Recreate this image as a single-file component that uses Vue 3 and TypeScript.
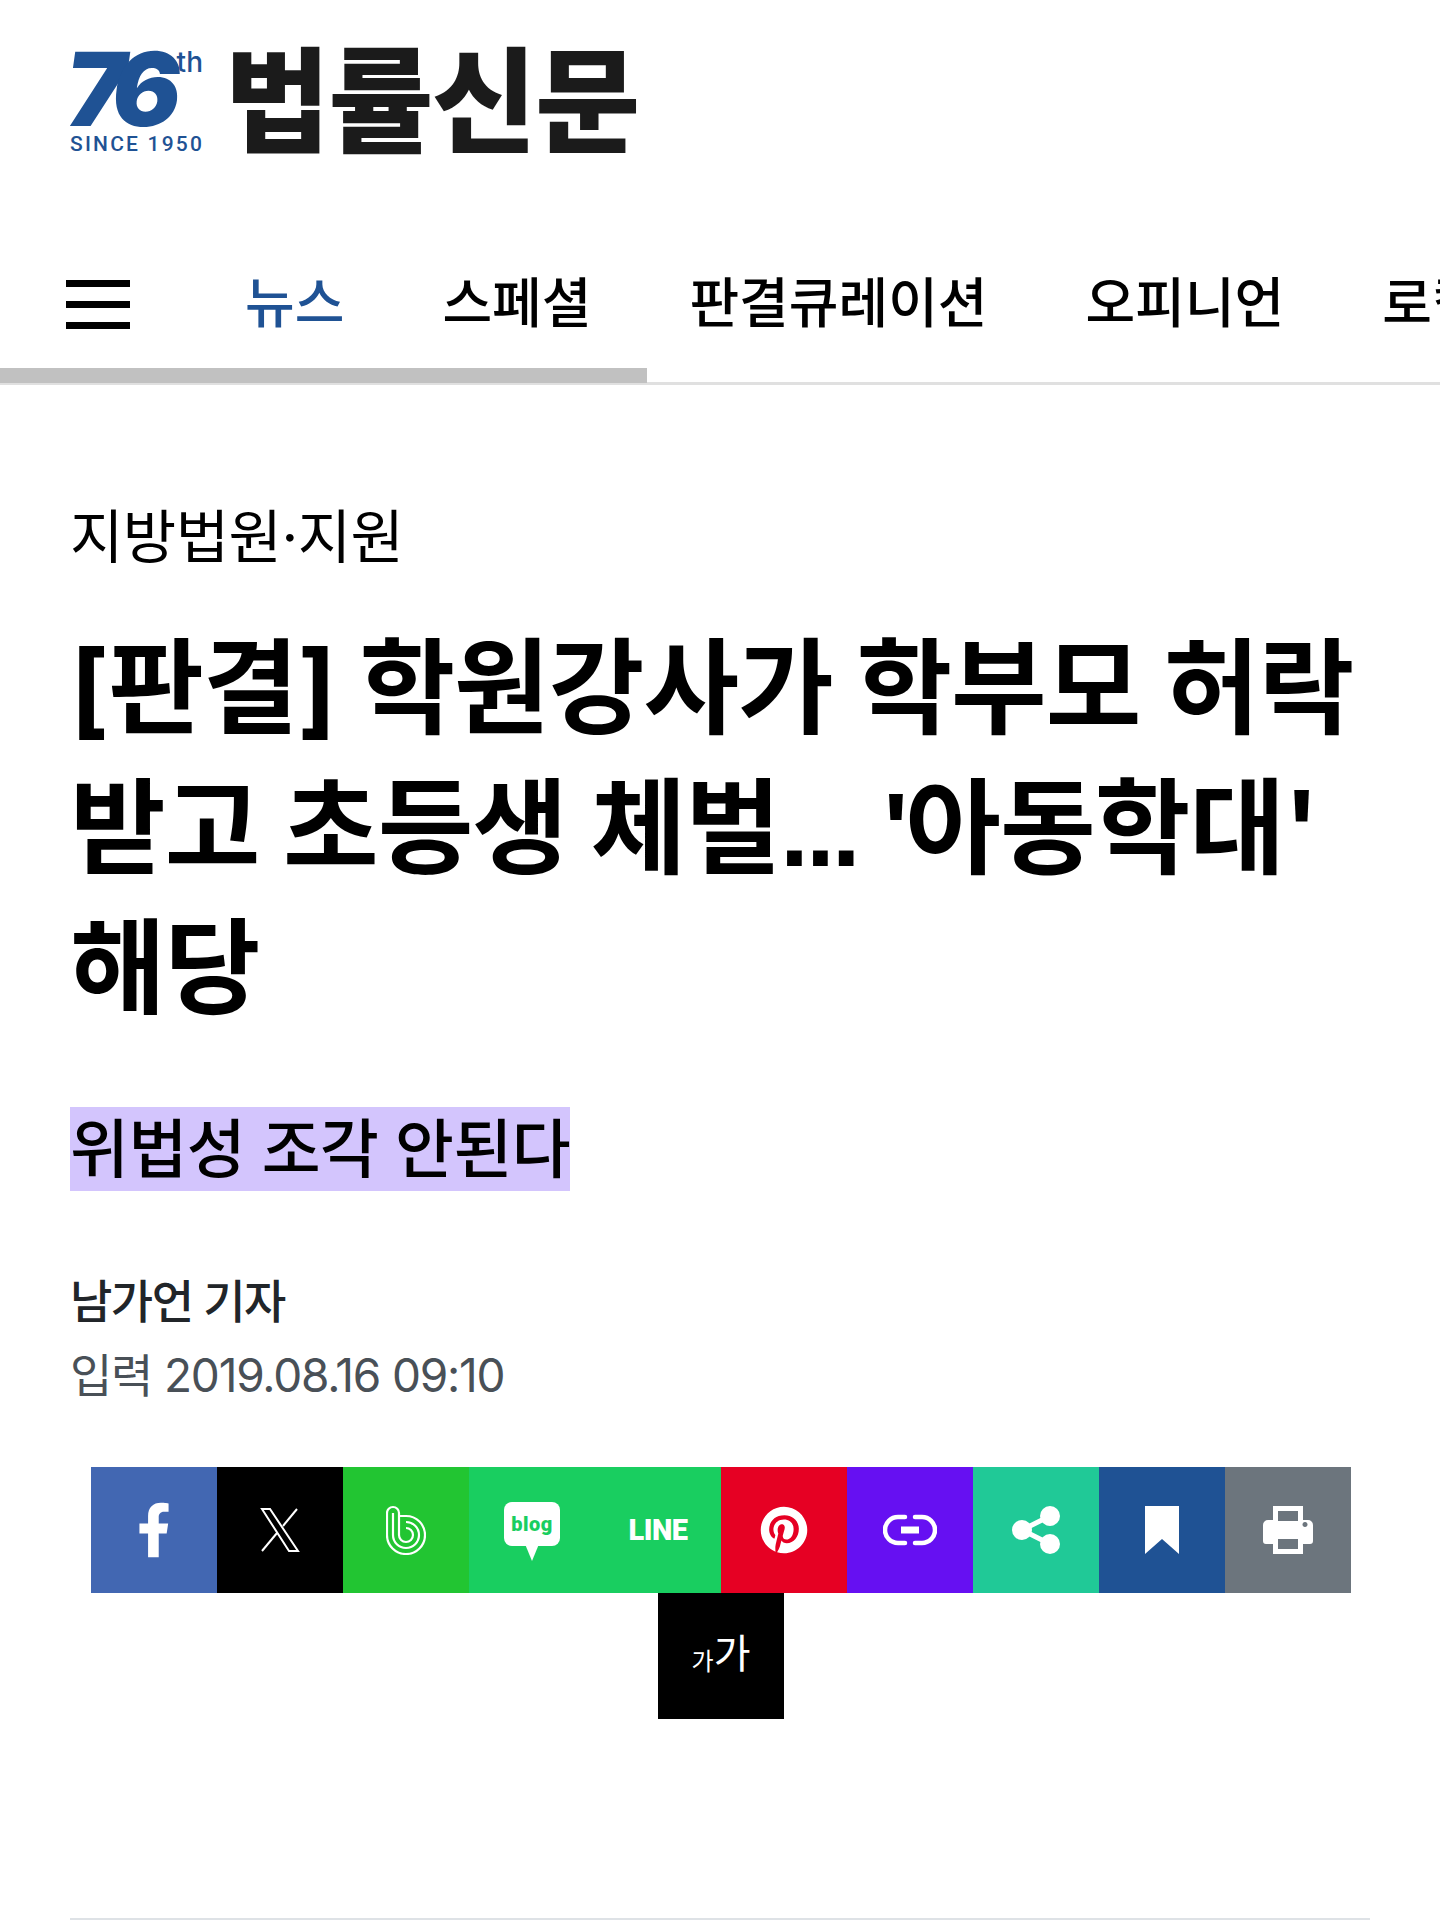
<script setup lang="ts">
const navItems = ['스페셜', '판결큐레이션', '오피니언', '로컬']
</script>

<template>
  <div class="page">
    <header class="brand">
      <div class="mark">
        <div class="years"><span class="digits">76</span><span class="th">th</span></div>
        <div class="since">SINCE 1950</div>
      </div>
      <div class="paper">법률신문</div>
    </header>

    <nav class="nav">
      <button class="burger" aria-label="메뉴">
        <i></i><i></i><i></i>
      </button>
      <a class="nav-item active">뉴스</a>
      <a v-for="item in navItems" :key="item" class="nav-item">{{ item }}</a>
      <div class="nav-progress"></div>
    </nav>

    <main class="article">
      <div class="category">지방법원·지원</div>
      <h1 class="title">[판결] 학원강사가 학부모 허락 받고 초등생 체벌<span class="tight">... '</span>아동학대' 해당</h1>
      <h2 class="subtitle"><span>위법성 조각 안된다</span></h2>
      <div class="author">남가언 기자</div>
      <div class="date">입력 2019.08.16 09:10</div>

      <div class="share">
        <a class="btn facebook">
          <svg width="34" height="56" viewBox="0 0 320 512"><path fill="#fff" d="M279.14 288l14.22-92.66h-88.91v-60.13c0-25.35 12.42-50.06 52.24-50.06h40.42V6.26S260.43 0 225.36 0c-73.22 0-121.08 44.38-121.08 124.72v70.62H22.89V288h81.39v224h100.17V288z" /></svg>
        </a>
        <a class="btn x">
          <svg width="40" height="46" viewBox="0 0 40 46" fill="none" stroke="#fff" stroke-width="2">
            <path d="M2 2h8l28 42h-9z" />
            <path d="M37 2L23 19" />
            <path d="M17 26L2 44" />
          </svg>
        </a>
        <a class="btn band">
          <svg width="40" height="50" viewBox="0 0 40 50" fill="none" stroke="#fff" stroke-width="2.200">
            <path d="M1 8v22a19 19 0 1 0 19-19h-7" />
            <path d="M1 8a6 6 0 0 1 12 0v22a7 7 0 1 0 7-7" />
            <path d="M7 8v22a13 13 0 1 0 13-13" />
          </svg>
        </a>
        <a class="btn blog">
          <div class="bubble"><span>blog</span></div>
        </a>
        <a class="btn line"><span>LINE</span></a>
        <a class="btn pinterest">
          <svg width="48" height="48" viewBox="0 0 496 512"><path fill="#fff" d="M496 256c0 137-111 248-248 248-25.6 0-50.2-3.9-73.4-11.1 10.1-16.5 25.2-43.5 30.8-65 3-11.6 15.4-59 15.4-59 8.1 15.4 31.7 28.5 56.8 28.5 74.8 0 128.7-68.8 128.7-154.3 0-81.9-66.9-143.2-152.9-143.2-107 0-163.9 71.8-163.9 150.1 0 36.4 19.4 81.7 50.3 96.1 4.7 2.2 7.2 1.2 8.3-3.3.8-3.4 5-20.3 6.9-28.1.6-2.5.3-4.7-1.7-7.1-10.1-12.5-18.3-35.3-18.3-56.6 0-54.7 41.4-107.6 112-107.6 60.9 0 103.6 41.5 103.6 100.9 0 67.1-33.9 113.6-78 113.6-24.3 0-42.6-20.1-36.7-44.8 7-29.5 20.5-61.3 20.5-82.6 0-19-10.2-34.9-31.4-34.9-24.9 0-44.9 25.7-44.9 60.2 0 22 7.4 36.8 7.4 36.8s-24.5 103.8-29 123.2c-5 21.4-3 51.6-.9 71.2C65.4 450.9 0 361.1 0 256 0 119 111 8 248 8s248 111 248 248z" /></svg>
        </a>
        <a class="btn link">
          <svg width="54" height="32" viewBox="0 0 54 32" fill="none" stroke="#fff" stroke-width="4.500" stroke-linecap="round">
            <path d="M22 3H15a13 13 0 0 0 0 26h7" />
            <path d="M32 3h7a13 13 0 0 1 0 26h-7" />
            <path d="M18 16h18" stroke-width="7" stroke-linecap="butt" />
          </svg>
        </a>
        <a class="btn sharing">
          <svg width="48" height="48" viewBox="0 0 48 48"><path d="M38 10L10 24l28 14" fill="none" stroke="#fff" stroke-width="5" /><circle cx="38" cy="10" r="10" fill="#fff" /><circle cx="10" cy="24" r="10" fill="#fff" /><circle cx="38" cy="38" r="10" fill="#fff" /></svg>
        </a>
        <a class="btn bookmark">
          <svg width="34" height="48" viewBox="0 0 34 48"><path fill="#fff" d="M0 0h34v48L17 33 0 48z" /></svg>
        </a>
        <a class="btn print">
          <svg width="50" height="48" viewBox="0 0 50 48"><path fill="#fff" fill-rule="evenodd" d="M10 0h30v14h5a5 5 0 0 1 5 5v16a3 3 0 0 1-3 3h-7v10H10V38H3a3 3 0 0 1-3-3V19a5 5 0 0 1 5-5h5zm5 5v10h20V5zm0 28v10h20V33zm27-17a2.500 2.500 0 1 0 .01 0z" /></svg>
        </a>
        <a class="btn fontsize"><small>가</small><span>가</span></a>
      </div>
      <hr class="rule" />
    </main>
  </div>
</template>

<style>
html,
body {
  margin: 0;
  background: #fff;
}
</style>

<style scoped>
.page {
  width: 1440px;
  height: 1920px;
  overflow: hidden;
  font-family: "Inter", "Noto Sans CJK KR", "Noto Sans", sans-serif;
  color: #000;
}

.brand {
  display: flex;
  align-items: center;
  gap: 22px;
  height: 204px;
  padding-left: 70px;
}

.mark {
  width: 133px;
  flex: none;
  color: #1f5294;
}

.years {
  position: relative;
  height: 82px;
  font-family: "Inter", sans-serif;
  font-size: 102px;
  font-weight: 900;
  line-height: 82px;
  letter-spacing: -13px;
}

.digits {
  display: inline-block;
  margin-left: 3px;
  transform: skewX(-8deg);
  transform-origin: left top;
}

.th {
  position: absolute;
  top: -1px;
  right: 0;
  font-size: 28px;
  font-weight: 500;
  line-height: 30px;
  letter-spacing: 0;
}

.since {
  margin-top: 2px;
  font-family: "Roboto", sans-serif;
  font-size: 21px;
  font-weight: 500;
  line-height: 24px;
  letter-spacing: 2.2px;
  white-space: nowrap;
}

.paper {
  margin-bottom: 1px;
  font-size: 114px;
  font-weight: 900;
  line-height: 120px;
  letter-spacing: -1.5px;
  color: #1b1b1b;
}

.nav {
  position: relative;
  display: flex;
  align-items: center;
  height: 156px;
  padding: 22px 0 0 66px;
  border-bottom: 3px solid #e0e0e0;
  white-space: nowrap;
}

.burger {
  display: flex;
  flex: none;
  flex-direction: column;
  gap: 14px;
  width: 64px;
  margin-right: 115px;
  padding: 0;
  background: none;
  border: 0;
}

.burger i {
  display: block;
  height: 7px;
  background: #000;
}

.nav-item {
  flex: none;
  margin-right: 98px;
  font-size: 54px;
  font-weight: 500;
  line-height: 70px;
}

.nav-item.active {
  color: #1f5294;
}

.nav-progress {
  position: absolute;
  left: 0;
  bottom: -1px;
  width: 647px;
  height: 15px;
  background: #c1c1c1;
}

.article {
  padding: 0 70px;
}

.category {
  margin-top: 110px;
  font-size: 58px;
  line-height: 84px;
  letter-spacing: -0.5px;
}

.title {
  margin: 39px 0 0;
  font-size: 104px;
  font-weight: 700;
  line-height: 140px;
  letter-spacing: -1px;
}

.tight {
  font-family: "Liberation Sans", sans-serif;
  line-height: 0;
  letter-spacing: -3px;
}

.subtitle {
  margin: 69px 0 0;
  font-size: 64px;
  font-weight: 500;
  line-height: 84px;
  letter-spacing: -0.5px;
}

.subtitle span {
  padding: 3px 0 4px;
  background: #d3c5fd;
}

.author {
  margin-top: 75px;
  font-size: 46px;
  font-weight: 500;
  line-height: 70px;
  letter-spacing: -1.5px;
  color: #212529;
}

.date {
  margin-top: 4px;
  font-size: 46px;
  line-height: 70px;
  letter-spacing: -1.2px;
  color: #495057;
}

.share {
  display: flex;
  flex-wrap: wrap;
  justify-content: center;
  margin: 57px 0 0 2px;
}

.btn {
  display: flex;
  align-items: center;
  justify-content: center;
  flex: none;
  width: 126px;
  height: 126px;
  color: #fff;
}

.facebook { background: #4267b2; }
.x { background: #000; }
.band { background: #22c532; }
.blog { background: #19ce60; }
.line { background: #19ce60; }
.pinterest { background: #e60023; }
.link { background: #6610f2; }
.sharing { background: #20c997; }
.bookmark { background: #1f5294; }
.print { background: #6c757d; }
.fontsize { background: #000; }

.bubble {
  position: relative;
  display: flex;
  align-items: center;
  justify-content: center;
  width: 56px;
  height: 44px;
  margin-top: -12px;
  border-radius: 8px;
  background: #fff;
}

.bubble::after {
  content: "";
  position: absolute;
  left: 21px;
  top: 42px;
  border-style: solid;
  border-width: 17px 7px 0;
  border-color: #fff transparent transparent;
}

.bubble span {
  font-family: "Roboto", sans-serif;
  font-size: 20px;
  font-weight: 900;
  letter-spacing: 0.5px;
  color: #19ce60;
}

.line span {
  font-family: "Roboto", sans-serif;
  font-size: 29px;
  font-weight: 900;
  letter-spacing: -0.5px;
}

.fontsize {
  align-items: flex-end;
  padding-bottom: 42px;
  box-sizing: border-box;
  font-weight: 400;
}

.fontsize small {
  font-size: 24px;
  line-height: 30px;
}

.fontsize span {
  font-size: 40px;
  line-height: 46px;
}

.rule {
  height: 2px;
  margin: 199px 0 0;
  background: #dee2e6;
  border: 0;
}
</style>
